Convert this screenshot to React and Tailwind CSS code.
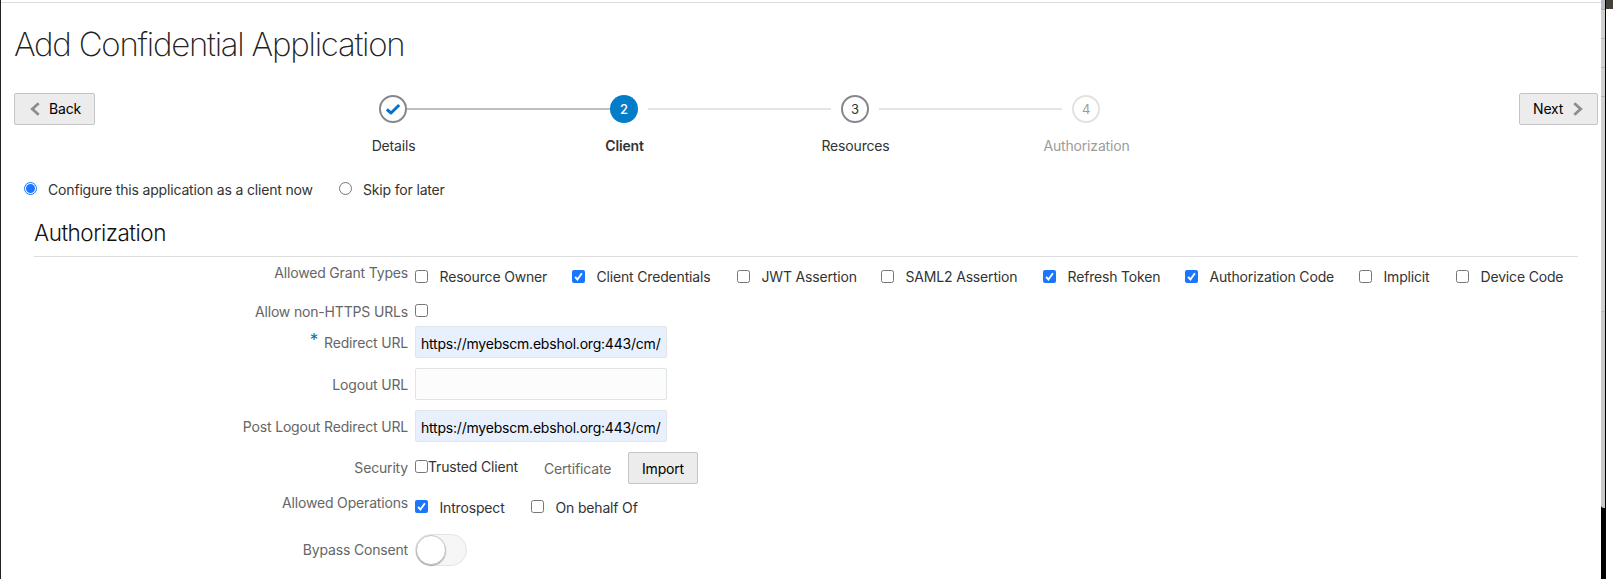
import React from "react";

function Checkbox({ checked, className = "" }) {
  return checked ? (
    <svg viewBox="0 0 13 13" className={`size-[13px] shrink-0 ${className}`}>
      <rect width="13" height="13" rx="2" fill="#1a75ff" />
      <path d="M3.1 6.9 5.4 9.5 9.9 3.3" fill="none" stroke="#fff" strokeWidth="1.9" />
    </svg>
  ) : (
    <span className={`block size-[13px] shrink-0 rounded-[2.5px] border border-[#767676] bg-white ${className}`} />
  );
}

function Option({ label, checked, className }) {
  return (
    <div className={`flex shrink-0 ${className}`}>
      <Checkbox checked={checked} className="mt-[3px]" />
      <span className="ml-[11.5px]">{label}</span>
    </div>
  );
}

function Row({ label, className, labelClass = "", required, children }) {
  return (
    <div className={`flex ${className}`}>
      <div className={`flex w-[407px] shrink-0 justify-end text-[#666] ${labelClass}`}>
        {required && <span className="mt-[-3px] mr-[6px] text-[17px] text-[#0572ae]">*</span>}
        <span>{label}</span>
      </div>
      <div className="ml-[7px] flex">{children}</div>
    </div>
  );
}

function Field({ value }) {
  return (
    <div
      className={`flex h-8 w-[252px] items-center rounded-[2px] border border-[#dfe4e7] pt-[3px] pl-[5px] text-black ${
        value ? "bg-[#e8f0fe]" : "bg-[#fcfcfc]"
      }`}
    >
      <span className="tracking-[-0.21px]">{value}</span>
    </div>
  );
}

function Step({ number, label, circle, text = "" }) {
  return (
    <div className="flex w-7 shrink-0 flex-col items-center">
      <div className={`flex size-7 items-center justify-center rounded-full text-[13px] ${circle}`}>
        {number ?? (
          <svg viewBox="0 0 16 14" className="h-[14px] w-4 shrink-0">
            <path d="M1.8 7.3 6 11 14.2 3" fill="none" stroke="#0572ce" strokeWidth="3" strokeLinejoin="round" />
          </svg>
        )}
      </div>
      <span className={`mt-[13px] ml-px whitespace-nowrap ${text}`}>{label}</span>
    </div>
  );
}

const grantTypes = [
  { label: "Resource Owner", className: "w-[157px]" },
  { label: "Client Credentials", checked: true, className: "w-[165px]" },
  { label: "JWT Assertion", className: "w-[144px]" },
  { label: "SAML2 Assertion", className: "w-[162px]" },
  { label: "Refresh Token", checked: true, className: "w-[142px]" },
  { label: "Authorization Code", checked: true, className: "w-[174px]" },
  { label: "Implicit", className: "w-[97px]" },
  { label: "Device Code", className: "w-[110px]" },
];

const button = "flex h-8 items-center rounded-[2px] border border-[#c4c4c4] bg-[#ececec] text-black";

export default function App() {
  return (
    <div className="flex h-[579px] w-[1613px] overflow-hidden bg-white font-['Inter',sans-serif] text-[14px] leading-5 tracking-[-0.17px] whitespace-nowrap text-[#333]">
      <main className="flex w-[1601px] shrink-0 flex-col border-l border-[#222]">
        <div className="mt-[2px] h-px shrink-0 bg-[#dedede]" />
        <h1 className="mt-[21px] ml-[13px] h-10 text-[33px] leading-10 font-extralight tracking-[-1.25px] text-[#222]">
          Add Confidential Application
        </h1>

        <div className="mt-[29px] flex h-[76px] items-start pl-[13px]">
          <button className={`${button} w-[81px] pl-[15px]`}>
            <svg viewBox="0 0 10 14" className="h-[14px] w-[10px]">
              <path d="M8.7 1.2 2.3 7l6.4 5.8" fill="none" stroke="#8b8d8e" strokeWidth="2.8" />
            </svg>
            <span className="ml-[9px]">Back</span>
          </button>

          <div className="mt-[2px] ml-[284px] flex">
            <Step label="Details" circle="border-2 border-[#85898b]" />
            <div className="mt-[13px] h-[2px] w-[203px] bg-[#c0c0c0]" />
            <Step number="2" label="Client" circle="bg-[#047dc9] text-white font-medium" text="font-semibold" />
            <div className="mx-[10px] mt-[13px] h-[2px] w-[183px] bg-[#e4e4e4]" />
            <Step number="3" label="Resources" circle="border-2 border-[#85898b]" />
            <div className="mx-[10px] mt-[13px] h-[2px] w-[183px] bg-[#e4e4e4]" />
            <Step number="4" label="Authorization" circle="border-2 border-[#e2e2e2] text-[#9c9c9c]" text="text-[#9c9c9c]" />
          </div>

          <button className={`${button} mr-[3px] ml-auto w-[79px] pl-[13px]`}>
            <span>Next</span>
            <svg viewBox="0 0 10 14" className="ml-[9.5px] h-[14px] w-[10px]">
              <path d="M1.3 1.2 7.7 7l-6.4 5.8" fill="none" stroke="#8b8d8e" strokeWidth="2.8" />
            </svg>
          </button>
        </div>

        <div className="mt-[11px] flex h-5 pl-[23px]">
          <span className="mt-[2px] flex size-[13px] items-center justify-center rounded-full border border-[#1a75ff]">
            <span className="size-[9px] rounded-full bg-[#1a75ff]" />
          </span>
          <span className="ml-[11px] w-[291px]">Configure this application as a client now</span>
          <span className="mt-[2px] size-[13px] rounded-full border border-[#767676]" />
          <span className="ml-[11px]">Skip for later</span>
        </div>

        <h2 className="mt-[18px] mr-[23px] ml-[33px] h-[39px] border-b border-[#dedede] text-[22.5px] leading-[30px] font-light tracking-[-0.5px] text-[#111]">
          Authorization
        </h2>

        <section className="flex flex-col">
          <Row label="Allowed Grant Types" className="h-[45px]" labelClass="pt-[6px]">
            <div className="flex pt-[10px]">
              {grantTypes.map((g) => (
                <Option key={g.label} {...g} />
              ))}
            </div>
          </Row>
          <Row label="Allow non-HTTPS URLs" className="h-6">
            <Checkbox className="mt-[2px]" />
          </Row>
          <Row label="Redirect URL" required className="h-[42px]" labelClass="pt-[7px]">
            <Field value="https://myebscm.ebshol.org:443/cm/" />
          </Row>
          <Row label="Logout URL" className="h-[42px]" labelClass="pt-[7px]">
            <Field />
          </Row>
          <Row label="Post Logout Redirect URL" className="h-[42px]" labelClass="pt-[7px]">
            <Field value="https://myebscm.ebshol.org:443/cm/" />
          </Row>
          <Row label="Security" className="h-[41px]" labelClass="pt-[6px]">
            <Checkbox className="mt-[8px]" />
            <span className="mt-[5px] w-[116px]">Trusted Client</span>
            <span className="mt-[7px] w-[84px] text-[#666]">Certificate</span>
            <button className={`${button} w-[70px] justify-center pt-px`}>Import</button>
          </Row>
          <Row label="Allowed Operations" className="h-[41px]">
            <div className="flex pt-[5px]">
              <div className="flex w-[116px]">
                <Checkbox checked className="mt-[2px]" />
                <span className="ml-[11.5px]">Introspect</span>
              </div>
              <Checkbox className="mt-[2px]" />
              <span className="ml-[11.5px]">On behalf Of</span>
            </div>
          </Row>
          <Row label="Bypass Consent" className="h-8" labelClass="pt-[6px]">
            <div className="h-8 w-[52px] rounded-full border border-[#e4e4e4] bg-[#f6f6f6]">
              <div className="size-[30px] rounded-full border border-[#c4c4c4] bg-white shadow-[0_1px_1px_rgba(0,0,0,0.3)]" />
            </div>
          </Row>
        </section>
      </main>

      <div className="flex w-[5px] shrink-0 flex-col border-r border-black">
        <div className="h-[10px] border-b border-[#a5a7ad] bg-[#bcbec4]" />
        <div className="h-[29px] border-b border-[#b4b4b4] bg-[#d0d0d0]" />
        <div className="h-[29px] border-b border-[#b4b4b4] bg-[#d0d0d0]" />
        <div className="h-[29px] border-b border-[#b4b4b4] bg-[#d0d0d0]" />
        <div className="h-[215px] border-b border-[#b4b6b9] bg-[#d0d0d0]" />
        <div className="flex h-[196px] flex-col bg-black">
          <div className="h-full rounded-bl-[3px] bg-[#c6c8cb]" />
        </div>
        <div className="h-[71px] bg-black" />
      </div>
      <div className="h-[9px] w-[7px] bg-[#454039]" />
    </div>
  );
}
